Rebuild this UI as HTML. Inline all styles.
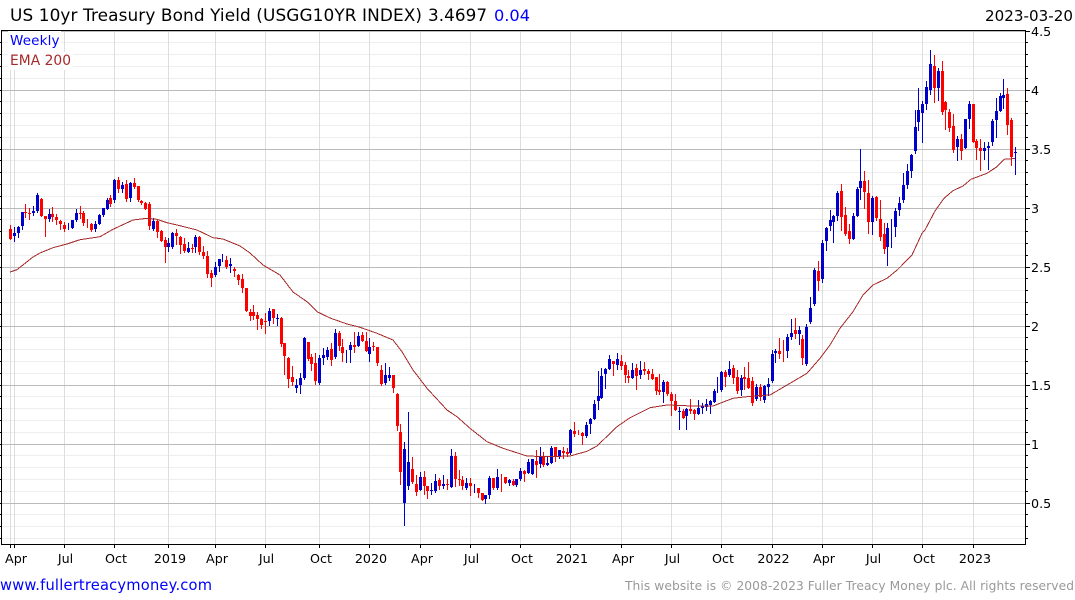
<!DOCTYPE html>
<html><head><meta charset="utf-8"><title>US 10yr Treasury Bond Yield</title>
<style>
html,body{margin:0;padding:0;background:#fff;width:1075px;height:600px;overflow:hidden}
svg{display:block;font-family:"DejaVu Sans","Liberation Sans",sans-serif}
</style></head><body>
<svg width="1075" height="600" viewBox="0 0 1075 600" xmlns="http://www.w3.org/2000/svg">
<g shape-rendering="crispEdges" fill="none">
<path stroke="#eee" d="M2 42.5H1025M2 54.5H1025M2 66.5H1025M2 78.5H1025M2 101.5H1025M2 113.5H1025M2 125.5H1025M2 137.5H1025M2 160.5H1025M2 172.5H1025M2 184.5H1025M2 196.5H1025M2 219.5H1025M2 231.5H1025M2 243.5H1025M2 255.5H1025M2 278.5H1025M2 290.5H1025M2 302.5H1025M2 314.5H1025M2 337.5H1025M2 349.5H1025M2 361.5H1025M2 373.5H1025M2 396.5H1025M2 408.5H1025M2 420.5H1025M2 432.5H1025M2 455.5H1025M2 467.5H1025M2 479.5H1025M2 491.5H1025M2 514.5H1025M2 526.5H1025M2 538.5H1025"/>
<path stroke="#ddd" d="M10.5 31V544M14.5 31V544M64.5 31V544M114.5 31V544M168.5 31V544M215.5 31V544M265.5 31V544M319.5 31V544M369.5 31V544M420.5 31V544M470.5 31V544M520.5 31V544M570.5 31V544M621.5 31V544M671.5 31V544M721.5 31V544M772.5 31V544M822.5 31V544M872.5 31V544M922.5 31V544M973.5 31V544"/>
<path stroke="#bbb" d="M2 31.5H1025M2 90.5H1025M2 149.5H1025M2 208.5H1025M2 267.5H1025M2 326.5H1025M2 385.5H1025M2 444.5H1025M2 503.5H1025"/>
<rect x="8" y="31" width="53" height="21" fill="#fff" stroke="none"/>
<rect x="8" y="52" width="65" height="18" fill="#fff" stroke="none"/>
<!-- red wicks -->
<path stroke="#f00" d="M10.5 225V240M25.5 204V218M29.5 208V220M41.5 198V217M45.5 216V237M52.5 207V222M56.5 214V225M60.5 220V230M64.5 222V232M80.5 206V219M83.5 211V226M87.5 219V228M91.5 223V232M110.5 195V207M118.5 177V193M126.5 180V202M134.5 178V189M138.5 186V202M141.5 200V205M145.5 202V210M149.5 202V230M157.5 219V238M161.5 230V242M165.5 237V263M176.5 229V245M180.5 236V254M184.5 238V253M192.5 244V253M199.5 236V255M203.5 246V259M207.5 251V278M211.5 270V287M226.5 256V269M234.5 267V277M238.5 274V285M242.5 274V293M246.5 288V312M250.5 309V321M253.5 305V320M257.5 312V330M261.5 318V329M265.5 313V334M273.5 309V324M281.5 317V347M284.5 343V375M288.5 357V388M292.5 366V386M308.5 342V361M311.5 354V371M315.5 353V385M331.5 343V366M339.5 331V351M342.5 339V362M354.5 332V353M362.5 332V342M366.5 332V352M373.5 342V351M377.5 347V366M381.5 365V386M393.5 375V393M397.5 393V431M400.5 424V485M412.5 457V484M416.5 475V496M424.5 471V495M427.5 486V499M439.5 478V490M447.5 479V490M455.5 452V487M459.5 470V486M462.5 476V490M470.5 478V496M478.5 488V498M482.5 493V501M493.5 478V490M501.5 474V492M505.5 477V484M513.5 479V486M524.5 470V482M536.5 450V478M543.5 452V467M555.5 447V462M563.5 447V459M567.5 448V457M574.5 422V437M578.5 430V435M582.5 432V445M613.5 361V376M621.5 355V370M625.5 362V383M628.5 370V383M636.5 364V390M644.5 362V375M648.5 369V380M652.5 369V380M656.5 377V395M659.5 374V395M667.5 381V396M671.5 392V416M675.5 394V411M683.5 409V419M690.5 399V414M694.5 409V420M725.5 370V387M733.5 365V384M737.5 370V394M744.5 367V390M748.5 362V389M752.5 377V406M760.5 384V401M779.5 338V359M783.5 340V362M795.5 318V339M802.5 335V365M818.5 261V291M841.5 184V231M845.5 207V236M849.5 224V244M864.5 171V209M868.5 180V234M876.5 196V221M880.5 200V241M884.5 223V254M934.5 55V103M942.5 61V115M945.5 101V130M949.5 109V132M953.5 114V153M961.5 134V160M973.5 104V143M976.5 139V160M980.5 139V171M1007.5 88V135M1011.5 118V166"/>
<!-- red bodies -->
<path stroke="#f00" stroke-width="3" d="M10.5 229V239M25.5 212V213M29.5 213V214M41.5 199V216M45.5 216V219M52.5 214V217M56.5 217V220M60.5 221V224M64.5 225V229M80.5 213V214M83.5 213V223M91.5 224V230M110.5 198V204M118.5 180V189M126.5 184V199M134.5 183V187M138.5 186V200M141.5 201V203M145.5 203V209M149.5 204V226M157.5 221V232M161.5 231V241M165.5 240V247M176.5 233V236M180.5 237V245M184.5 244V251M192.5 248V249M199.5 237V252M203.5 252V256M207.5 256V274M211.5 273V278M226.5 260V267M234.5 269V271M238.5 275V280M242.5 279V288M246.5 288V311M250.5 312V316M253.5 312V316M257.5 315V319M261.5 319V325M265.5 321V322M273.5 309V318M281.5 318V344M284.5 343V356M288.5 358V379M292.5 377V382M308.5 342V359M311.5 357V364M315.5 363V381M331.5 349V360M339.5 333V346M342.5 347V353M354.5 345V347M362.5 335V341M366.5 341V351M373.5 346V347M377.5 347V363M381.5 370V384M393.5 375V388M397.5 394V426M400.5 432V472M412.5 469V482M416.5 484V492M424.5 477V486M427.5 486V491M439.5 480V486M447.5 484V485M455.5 456V479M459.5 479V480M462.5 480V486M470.5 483V486M478.5 488V493M482.5 493V500M493.5 478V488M505.5 477V483M513.5 481V485M524.5 471V474M536.5 461V465M543.5 456V465M555.5 447V457M563.5 451V453M567.5 452V454M574.5 431V434M582.5 433V436M613.5 361V364M621.5 361V366M625.5 365V375M628.5 376V378M636.5 368V376M644.5 369V371M648.5 371V374M652.5 374V379M656.5 377V391M659.5 390V392M667.5 382V394M671.5 394V401M675.5 401V410M683.5 411V418M690.5 409V411M694.5 410V414M725.5 372V377M733.5 368V378M737.5 377V391M744.5 377V379M748.5 378V388M752.5 381V403M760.5 387V397M779.5 351V354M795.5 330V334M802.5 339V358M818.5 271V281M841.5 191V217M845.5 215V234M849.5 231V239M864.5 181V192M868.5 193V222M876.5 197V218M880.5 219V237M884.5 234V249M934.5 66V88M942.5 71V112M945.5 102V110M949.5 112V128M953.5 126V150M961.5 139V151M973.5 104V142M976.5 141V148M980.5 148V151M1007.5 94V125M1011.5 120V157"/>
<!-- blue wicks -->
<path stroke="#00c" d="M14.5 227V242M18.5 226V238M22.5 212V230M33.5 206V216M37.5 193V213M49.5 209V222M68.5 223V230M72.5 220V229M76.5 209V222M95.5 221V232M99.5 214V225M103.5 208V217M107.5 198V210M114.5 179V203M122.5 182V193M130.5 182V202M153.5 218V231M168.5 238V252M172.5 232V249M188.5 242V253M195.5 235V253M215.5 262V277M219.5 259V272M222.5 254V262M230.5 258V273M269.5 308V326M277.5 314V326M296.5 379V393M300.5 373V394M304.5 337V380M319.5 355V385M323.5 348V365M327.5 347V360M335.5 329V359M346.5 350V363M350.5 342V363M358.5 332V347M369.5 338V362M385.5 363V385M389.5 367V381M404.5 442V526M408.5 412V490M420.5 472V491M431.5 483V495M435.5 474V493M443.5 475V489M451.5 449V488M466.5 478V490M474.5 484V493M485.5 495V504M489.5 476V499M497.5 469V490M509.5 479V486M516.5 479V487M520.5 468V481M528.5 459V474M532.5 459V475M540.5 447V468M547.5 457V466M551.5 446V464M559.5 450V459M570.5 429V455M586.5 422V438M590.5 418V434M594.5 400V420M598.5 371V410M601.5 368V399M605.5 368V389M609.5 355V370M617.5 353V370M632.5 363V379M640.5 361V379M663.5 380V403M679.5 407V430M686.5 408V430M698.5 400V415M702.5 403V414M706.5 399V411M710.5 400V414M714.5 389V403M717.5 377V393M721.5 371V392M729.5 361V377M741.5 375V396M756.5 384V401M764.5 385V403M768.5 378V396M772.5 350V383M775.5 349V363M787.5 334V358M791.5 319V340M799.5 326V345M806.5 324V366M810.5 297V324M814.5 268V306M822.5 240V283M826.5 227V251M830.5 210V231M833.5 215V243M837.5 191V221M853.5 213V240M857.5 187V217M860.5 149V200M872.5 196V235M887.5 223V266M891.5 219V248M895.5 208V237M899.5 197V216M903.5 173V203M907.5 164V189M911.5 154V178M915.5 110V154M918.5 88V131M922.5 101V143M926.5 81V110M930.5 50V95M938.5 68V101M957.5 136V161M965.5 119V149M969.5 101V129M984.5 142V160M988.5 142V170M992.5 119V146M996.5 98V138M1000.5 93V112M1003.5 79V109M1015.5 147V175"/>
<!-- blue bodies -->
<path stroke="#00c" stroke-width="3" d="M14.5 233V236M18.5 227V233M22.5 212V226M33.5 211V213M37.5 195V211M49.5 214V219M72.5 220V228M76.5 213V220M95.5 224V229M99.5 215V224M103.5 208V215M107.5 200V209M114.5 180V200M122.5 185V189M130.5 183V198M153.5 221V229M168.5 243V247M172.5 233V247M188.5 248V252M195.5 237V247M215.5 267V275M219.5 259V266M230.5 264V266M269.5 311V321M277.5 318V319M296.5 385V388M300.5 378V385M304.5 338V378M319.5 358V383M323.5 355V358M327.5 350V357M335.5 333V357M350.5 345V350M358.5 336V346M369.5 347V354M385.5 375V383M389.5 375V378M404.5 449V503M408.5 462V486M420.5 477V490M431.5 490V491M435.5 481V491M443.5 484V486M451.5 456V487M466.5 483V488M485.5 495V499M489.5 478V495M497.5 477V488M509.5 480V483M516.5 479V485M520.5 471V479M528.5 462V473M532.5 459V474M540.5 456V464M547.5 463V465M551.5 448V463M559.5 450V456M570.5 430V453M586.5 425V436M590.5 419V424M594.5 404V419M598.5 396V401M601.5 376V398M605.5 369V374M609.5 359V369M617.5 359V365M632.5 370V378M640.5 370V375M663.5 382V392M679.5 411V412M686.5 409V416M698.5 408V414M702.5 406V408M706.5 404V407M710.5 401V405M714.5 391V402M721.5 372V390M729.5 369V375M741.5 378V390M756.5 387V399M764.5 386V400M768.5 384V387M772.5 354V381M775.5 351V353M787.5 337V351M791.5 333V337M799.5 330V334M806.5 327V364M810.5 308V322M814.5 270V304M822.5 243V279M826.5 228V241M830.5 220V226M833.5 216V222M837.5 193V216M853.5 216V239M857.5 189V216M860.5 181V188M872.5 198V222M887.5 228V247M895.5 211V227M899.5 203V210M903.5 185V200M907.5 171V185M911.5 155V171M915.5 127V151M918.5 110V122M922.5 104V113M926.5 87V104M930.5 64V90M938.5 71V88M957.5 139V147M965.5 119V148M969.5 104V119M984.5 148V151M988.5 146V148M992.5 121V142M996.5 111V120M1000.5 96V111M1003.5 95V98M1015.5 152V153"/>
<!-- EMA 200 -->
<polyline stroke="#a52a2a" points="10,272 17,269.7 33,257 40,253 53,247.7 67,244 80,239.7 100,236.7 113,229.3 133,220 147,218.3 157,219.3 167,222.7 180,225.7 197,230 213,237.7 223,239 240,246 250,253 263,265 280,275 293,292 307,301.7 317,311.7 330,318 347,324 360,327.3 377,333.3 393,340 402,351.7 413,370 427,388.3 447,410 457,416.7 470,428.3 487,441.7 503,448.3 527,456 547,456.7 570,456 587,451.3 597,446 617,426.7 630,417.7 650,407.7 667,405 693,406 713,406 720,403.3 733,398.3 753,396 770,395 790,383.3 807,373.3 820,358.3 830,345 840,328.3 853,311.7 863,295 873,285 887,278.3 898,269.3 912,255 922,233.3 925,230 935,211 944,198.3 953,190.7 963,186 971,179.3 987,173.3 997,166.7 1004,159.3 1015,158.5"/>
<!-- frame and ticks -->
<path stroke="#000" d="M1.5 30V545M1025.5 30V545M1 30.5H1026M1 544.5H1026"/>
<path stroke="#000" d="M1026 31.5H1030M1026 90.5H1030M1026 149.5H1030M1026 208.5H1030M1026 267.5H1030M1026 326.5H1030M1026 385.5H1030M1026 444.5H1030M1026 503.5H1030M1026 42.5H1028M1026 54.5H1028M1026 66.5H1028M1026 78.5H1028M1026 101.5H1028M1026 113.5H1028M1026 125.5H1028M1026 137.5H1028M1026 160.5H1028M1026 172.5H1028M1026 184.5H1028M1026 196.5H1028M1026 219.5H1028M1026 231.5H1028M1026 243.5H1028M1026 255.5H1028M1026 278.5H1028M1026 290.5H1028M1026 302.5H1028M1026 314.5H1028M1026 337.5H1028M1026 349.5H1028M1026 361.5H1028M1026 373.5H1028M1026 396.5H1028M1026 408.5H1028M1026 420.5H1028M1026 432.5H1028M1026 455.5H1028M1026 467.5H1028M1026 479.5H1028M1026 491.5H1028M1026 514.5H1028M1026 526.5H1028M1026 538.5H1028"/>
<path stroke="#000" d="M0 42.5H1M0 54.5H1M0 66.5H1M0 78.5H1M0 90.5H1M0 101.5H1M0 113.5H1M0 125.5H1M0 137.5H1M0 149.5H1M0 160.5H1M0 172.5H1M0 184.5H1M0 196.5H1M0 208.5H1M0 219.5H1M0 231.5H1M0 243.5H1M0 255.5H1M0 267.5H1M0 278.5H1M0 290.5H1M0 302.5H1M0 314.5H1M0 326.5H1M0 337.5H1M0 349.5H1M0 361.5H1M0 373.5H1M0 385.5H1M0 396.5H1M0 408.5H1M0 420.5H1M0 432.5H1M0 444.5H1M0 455.5H1M0 467.5H1M0 479.5H1M0 491.5H1M0 503.5H1M0 514.5H1M0 526.5H1M0 538.5H1"/>
<path stroke="#000" d="M10.5 545V548M14.5 545V548M64.5 545V548M114.5 545V548M168.5 545V548M215.5 545V548M265.5 545V548M319.5 545V548M369.5 545V548M420.5 545V548M470.5 545V548M520.5 545V548M570.5 545V548M621.5 545V548M671.5 545V548M721.5 545V548M772.5 545V548M822.5 545V548M872.5 545V548M922.5 545V548M973.5 545V548"/>
</g>
<text x="10" y="21" font-size="16.9" fill="#000" textLength="412">US 10yr Treasury Bond Yield (USGG10YR INDEX)</text>
<text x="428" y="21" font-size="16.8" fill="#000" textLength="59">3.4697</text>
<text x="494" y="21" font-size="16.2" fill="#0000ff" textLength="36">0.04</text>
<text x="985" y="21" font-size="15.1" fill="#000" textLength="88">2023-03-20</text>
<text x="10" y="45" font-size="13.5" fill="#0000ff" textLength="49.5">Weekly</text>
<text x="10" y="65" font-size="13.8" fill="#a52a2a" textLength="61">EMA 200</text>
<g font-size="12.7" fill="#000">
<text x="1031" y="36">4.5</text><text x="1031" y="95">4</text><text x="1031" y="154">3.5</text><text x="1031" y="213">3</text><text x="1031" y="272">2.5</text><text x="1031" y="331">2</text><text x="1031" y="390">1.5</text><text x="1031" y="449">1</text><text x="1031" y="508">0.5</text>
<g text-anchor="middle">
<text x="16" y="563">Apr</text><text x="65.5" y="563">Jul</text><text x="116" y="563">Oct</text><text x="170" y="563">2019</text><text x="217" y="563">Apr</text><text x="266.5" y="563">Jul</text><text x="321" y="563">Oct</text><text x="371" y="563">2020</text><text x="422" y="563">Apr</text><text x="471.5" y="563">Jul</text><text x="522" y="563">Oct</text><text x="572" y="563">2021</text><text x="623" y="563">Apr</text><text x="672.5" y="563">Jul</text><text x="723" y="563">Oct</text><text x="773.5" y="563">2022</text><text x="824" y="563">Apr</text><text x="873.5" y="563">Jul</text><text x="924" y="563">Oct</text><text x="975" y="563">2023</text>
</g></g>
<text x="0" y="590" font-size="14.67" fill="#0000ff" textLength="212">www.fullertreacymoney.com</text>
<text x="625" y="590" font-size="12.25" fill="#999" textLength="449">This website is © 2008-2023 Fuller Treacy Money plc. All rights reserved</text>
</svg>
</body></html>
